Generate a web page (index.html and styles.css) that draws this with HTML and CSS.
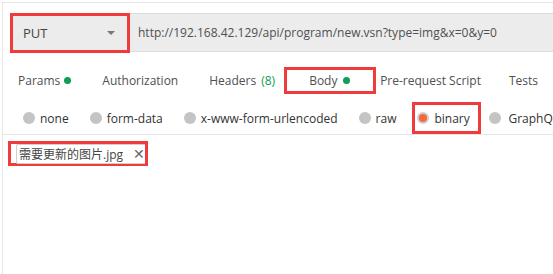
FILE: index.html
```html
<!DOCTYPE html>
<html lang="zh">
<head>
    <meta charset="UTF-8" />
    <title>PUT binary body</title>
    <link rel="stylesheet" href="styles.css">
</head>
<body>
    <div id="frame">
        <div id="urlbar">
            <div id="method" class="marked">
                <span>PUT</span>
                <span class="caret"></span>
            </div>
            <div id="url">http://192.168.42.129/api/program/new.vsn?type=img&amp;x=0&amp;y=0</div>
        </div>

        <div id="tabs">
            <div class="tab">Params<i class="dot"></i></div>
            <div class="tab">Authorization</div>
            <div class="tab" id="headersTab">Headers<span class="count">(8)</span></div>
            <div class="tab marked" id="bodyTab">Body<i class="dot"></i></div>
            <div class="tab" id="preTab">Pre-request Script</div>
            <div class="tab">Tests</div>
        </div>

        <div id="modes">
            <label class="mode"><i class="radio"></i>none</label>
            <label class="mode"><i class="radio"></i>form-data</label>
            <label class="mode"><i class="radio"></i>x-www-form-urlencoded</label>
            <label class="mode" id="raw"><i class="radio"></i>raw</label>
            <label class="mode marked" id="binary"><i class="radio on"></i>binary</label>
            <label class="mode" id="graphql"><i class="radio"></i>GraphQL</label>
        </div>

        <div id="fileRow">
            <div id="file" class="marked">
                <div class="chip">需要更新的图片.jpg <span class="close">✕</span></div>
            </div>
        </div>
    </div>
</body>
</html>
```

FILE: styles.css
```css
body {
    margin: 0;
    background: #fff;
    font-family: "Open Sans", "Noto Sans CJK SC", sans-serif;
    font-size: 12px;
    color: #505050;
    overflow: hidden;
}

#frame {
    margin: 2px 0 0 2px;
    border-top: 1px solid #e6e6e6;
    border-left: 1px solid #e6e6e6;
    height: 272px;
    box-sizing: border-box;
    overflow: hidden;
}

/* red marks drawn around the highlighted controls */
.marked {
    border: 3px solid #ef3b3b;
    box-sizing: border-box;
}

#urlbar {
    display: flex;
    padding: 10px 0 0 7px;
}

#method {
    width: 120px;
    height: 40px;
    background: #ececec;
    display: flex;
    align-items: center;
    justify-content: space-between;
    padding: 0 12px 0 10px;
    font-size: 13px;
    color: #444;
}

.caret {
    width: 0;
    height: 0;
    border-left: 4px solid transparent;
    border-right: 4px solid transparent;
    border-top: 4px solid #777;
}

#url {
    flex: 1;
    height: 39px;
    background: #ececec;
    border-top: 1px solid #dcdcdc;
    border-bottom: 1px solid #dcdcdc;
    box-sizing: border-box;
    display: flex;
    align-items: center;
    padding-left: 8px;
    font-size: 12px;
    color: #505050;
    white-space: nowrap;
}

#tabs {
    display: flex;
    align-items: center;
    height: 27px;
    margin-top: 14px;
    padding-left: 15px;
    white-space: nowrap;
}

.tab {
    display: flex;
    align-items: center;
    height: 27px;
    margin-right: 31px;
    flex-shrink: 0;
}

#headersTab {
    margin-right: 9px;
}

#bodyTab {
    width: 92px;
    padding-left: 22px;
    margin-right: 4px;
}

#preTab {
    margin-right: 28px;
}

.dot {
    display: inline-block;
    width: 7px;
    height: 7px;
    border-radius: 50%;
    background: #0f9d58;
    margin-left: 4px;
}

#bodyTab .dot {
    margin-left: 6px;
}

.count {
    color: #0f9d58;
    margin-left: 5px;
}

#modes {
    display: flex;
    align-items: center;
    height: 32px;
    margin-top: 8px;
    padding-left: 20px;
    white-space: nowrap;
    border-bottom: 1px solid #e6e6e6;
    color: #333;
}

.mode {
    display: flex;
    align-items: center;
    height: 32px;
    margin-right: 21px;
    flex-shrink: 0;
}

#raw {
    margin-right: 16px;
}

#graphql .radio {
    margin-right: 7px;
}

.radio {
    width: 12px;
    height: 12px;
    border-radius: 50%;
    background: #c4c4c4;
    margin-right: 5px;
    box-sizing: border-box;
}

.radio.on {
    background: #f26b3a;
    border: 2px solid #cfcfcf;
}

#binary {
    width: 69px;
    padding-left: 2px;
    margin-right: 8px;
}

#fileRow {
    padding: 6px 0 0 5px;
}

#file {
    display: inline-flex;
    align-items: center;
    width: 140px;
    height: 25px;
    padding-left: 5px;
}

.chip {
    flex: 1;
    border: 1px solid #d0d0d0;
    border-right: none;
    border-radius: 2px 0 0 2px;
    padding: 0 0 0 2px;
    height: 18px;
    display: flex;
    align-items: center;
    white-space: nowrap;
    font-size: 12px;
    color: #444;
}

.close {
    margin-left: 10px;
    font-size: 14px;
    color: #666;
}
```
